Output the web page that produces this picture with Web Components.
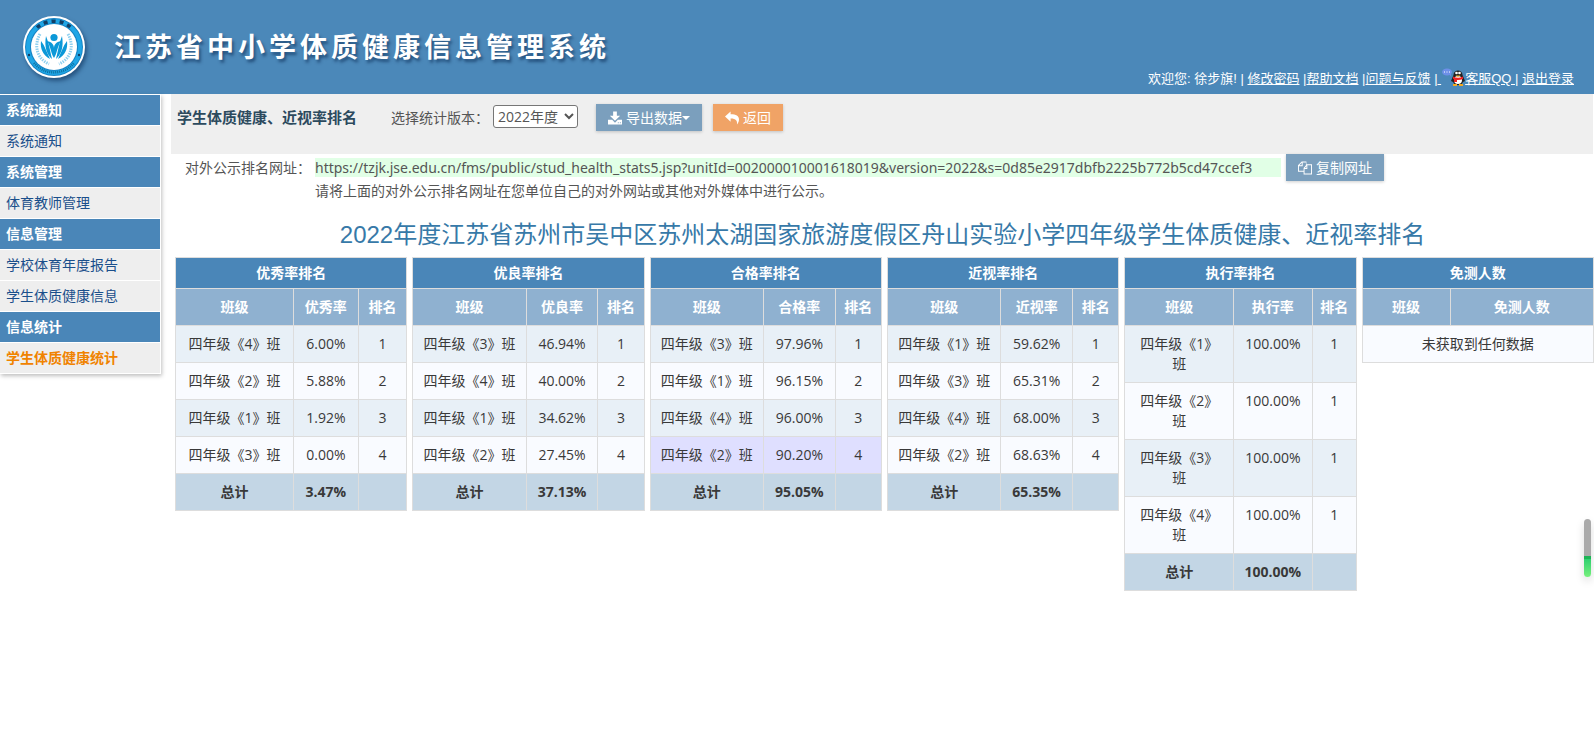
<!DOCTYPE html>
<html lang="zh-CN">
<head>
<meta charset="utf-8">
<title>江苏省中小学体质健康信息管理系统</title>
<style>
  body {
    margin: 0;
    background: #fff;
    color: #555;
    font: 14px/20px "Open Sans", "Noto Sans CJK SC", sans-serif;
  }
</style>
</head>
<body>
<health-app></health-app>

<script>
const define = (name, html, setup) => {
  const template = document.createElement("template");
  template.innerHTML = html;
  customElements.define(
    name,
    class extends HTMLElement {
      connectedCallback() {
        if (this.shadowRoot) return;
        this.attachShadow({ mode: "open" });
        this.shadowRoot.appendChild(template.content.cloneNode(true));
        if (setup) setup(this, this.shadowRoot);
      }
    }
  );
};

define("school-logo", /* HTML */ `
  <style>
    :host { display: block; width: 68px; height: 68px; }
    svg { display: block; filter: drop-shadow(2px 3px 2px rgb(0 30 70 / 0.5)); }
  </style>
  <svg width="68" height="68" viewBox="0 0 68 68" aria-hidden="true">
    <circle cx="34" cy="34" r="31" fill="#fff"/>
    <circle cx="34" cy="34" r="29" fill="#1583c4"/>
    <circle cx="34" cy="34" r="26" fill="none" stroke="#1fa6e6" stroke-width="4"/>
    <path d="M17 14.500A26 26 0 0 1 51 14.500" fill="none" stroke="#123f66" stroke-width="3.500" stroke-dasharray="4 4"/>
    <path d="M14 50A26 26 0 0 0 54 50" fill="none" stroke="#0d6d9c" stroke-width="2.500" stroke-dasharray="1 1"/>
    <circle cx="9" cy="42" r="1.200" fill="#123f66"/>
    <circle cx="59" cy="42" r="1.200" fill="#123f66"/>
    <circle cx="34" cy="34" r="23" fill="#fff"/>
    <path d="M20 21C14 32 16 45 29 51M48 21C54 32 52 45 39 51" fill="none" stroke="#8fd0ef" stroke-width="3" stroke-dasharray="1.500 1"/>
    <g fill="#0b98d8">
      <circle cx="34" cy="24.500" r="3.600"/>
      <path d="M34 45C31 41 31 34 27 28C32 29 34 32 34 35C34 32 36 29 41 28C37 34 37 41 34 45Z"/>
      <path d="M32 46C27 42 24 34 26 23C29 30 30 38 32 46ZM36 46C41 42 44 34 42 23C39 30 38 38 36 46Z"/>
      <path d="M30 46C23 42 20 36 21 28C25 33 27 40 30 46ZM38 46C45 42 48 36 47 28C43 33 41 40 38 46Z"/>
    </g>
  </svg>
`);

define("qq-icon", /* HTML */ `
  <style>
    :host { display: inline-block; width: 24px; height: 18px; vertical-align: -3px; }
    svg { display: block; }
  </style>
  <svg width="24" height="18" viewBox="0 0 24 18" aria-hidden="true">
    <ellipse cx="6" cy="4" rx="5" ry="3.500" fill="#6d8fe8"/>
    <path d="M7 6l3 2V5z" fill="#6d8fe8"/>
    <path d="M3 4h1M5.500 4h1M8 4h1" stroke="#fff"/>
    <path d="M12.500 7C12.500 1 21.500 1 21.500 7L24 13L22 14L20 17H14L12 14L10 13Z" fill="#222"/>
    <ellipse cx="17" cy="12" rx="4" ry="4" fill="#fff"/>
    <path d="M12 8.500Q17 11 22 8.500V11Q17 13 12 11ZM13 10h3v4h-3z" fill="#e22"/>
    <circle cx="15.500" cy="5" r="1.300" fill="#fff"/>
    <circle cx="18.500" cy="5" r="1.300" fill="#fff"/>
    <path d="M14.500 7.500h5l-2.500 1.500zM12 16h4v2h-4zM18 16h4v2h-4z" fill="#f5a81c"/>
  </svg>
`);

define("site-header", /* HTML */ `
  <style>
    :host {
      display: flex;
      align-items: center;
      gap: 26px;
      box-sizing: border-box;
      height: 94px;
      padding: 0 20px;
      background: #4b88b9;
      color: #fff;
    }
    h1 {
      margin: 0;
      padding-bottom: 2px;
      font: bold 27px/40px "Noto Sans CJK SC", sans-serif;
      letter-spacing: 4px;
      text-shadow: 2px 3px 3px rgb(0 30 70 / 0.5);
    }
    nav {
      align-self: flex-end;
      margin-left: auto;
      padding-bottom: 5px;
      font: 13px/20px "Liberation Sans", "Noto Sans CJK SC", sans-serif;
    }
    a { color: inherit; }
  </style>
  <school-logo></school-logo>
  <h1>江苏省中小学体质健康信息管理系统</h1>
  <nav>欢迎您: 徐步旗! | <a href="#">修改密码</a> |<a href="#">帮助文档</a> |<a href="#">问题与反馈</a> |<a href="#"> <qq-icon></qq-icon>客服QQ </a>| <a href="#">退出登录</a></nav>
`);

define("side-menu", /* HTML */ `
  <style>
    :host {
      display: block;
      border: solid #fff;
      border-width: 1px 1px 0 0;
      box-shadow: 1px 2px 4px rgb(0 0 0 / 0.25);
    }
  </style>
  <slot></slot>
`);

define("menu-group", /* HTML */ `
  <style>
    :host { display: block; }
    h2 {
      margin: 0;
      padding: 5px 6px;
      border-bottom: 1px solid #fff;
      background: #4a86b8;
      color: #fff;
      font-size: 14px;
      line-height: 20px;
    }
  </style>
  <h2></h2>
  <slot></slot>
`, (host, root) => {
  root.querySelector("h2").textContent = host.getAttribute("label");
});

define("menu-item", /* HTML */ `
  <style>
    :host { display: block; }
    a {
      display: block;
      padding: 5px 6px;
      border-bottom: 1px solid #fff;
      background: #eee;
      color: #1a4f8b;
      text-decoration: none;
    }
    :host([active]) a { color: #f08300; font-weight: bold; }
  </style>
  <a href="#"><slot></slot></a>
`);

define("flat-button", /* HTML */ `
  <style>
    :host { display: block; }
    button {
      display: flex;
      align-items: center;
      gap: 4px;
      height: 27px;
      padding: 0 12px;
      border: 0;
      background: var(--button-color, #7b9fbd);
      box-shadow: 0 1px 3px rgb(0 0 0 / 0.2);
      color: #fff;
      font: inherit;
      white-space: nowrap;
    }
    svg { fill: #fff; }
    .caret {
      display: none;
      margin-left: -4px;
      border: 4px solid transparent;
      border-top-color: #fff;
      border-bottom: 0;
    }
    :host([dropdown]) .caret { display: block; }
  </style>
  <button type="button">
    <svg width="14" height="14" viewBox="0 0 15 14" aria-hidden="true"><path/></svg>
    <slot></slot>
    <span class="caret"></span>
  </button>
`, (host, root) => {
  const icons = {
    download: "M5.500 0h4v4.500h3.500L7.500 10L2 4.500h3.500zM0 9h4.500l3 3l3-3H15v5H0zM10.500 11.500v1h1v-1zM12.700 11.500v1h1v-1z",
    reply: "M6 0v3C12 3 15 5 15 8.500c0 2.200-1 4-2.200 5.500C13.400 10 12 7.500 6 7.500V11L0 5.500z",
    copy: "M4 0h5v3h6v11H6v-3H0V4zM4 1.500L1.500 4H4zM5 1v4H1v5h5V7l2.500-3V1zM10 4v4H7v5h7V4zM9 5L7.500 7H9z"
  };
  const path = root.querySelector("path");
  path.setAttribute("d", icons[host.getAttribute("icon")]);
  path.setAttribute("fill-rule", "evenodd");
});

define("tool-bar", /* HTML */ `
  <style>
    :host {
      display: flex;
      align-items: flex-start;
      box-sizing: border-box;
      height: 60px;
      margin-right: 1px;
      padding: 10px 6px;
      background: #efefef;
    }
    h2 { margin: 0 34px 0 0; color: #2c4a5e; font-size: 15px; line-height: 27px; }
    label { margin-right: 4px; line-height: 27px; }
    select {
      width: 85px;
      height: 23px;
      margin: 1px 18px 0 0;
      padding: 0;
      border: 1px solid #767676;
      border-radius: 3px;
      background: #fff;
      color: #555;
      font: inherit;
    }
    .back { --button-color: #f0a366; margin-left: 11px; }
  </style>
  <h2>学生体质健康、近视率排名</h2>
  <label for="version">选择统计版本：</label>
  <select id="version"><option>2022年度</option></select>
  <flat-button icon="download" dropdown>导出数据</flat-button>
  <flat-button class="back" icon="reply">返回</flat-button>
`);

define("public-link", /* HTML */ `
  <style>
    :host {
      display: grid;
      grid-template-columns: 126px 1fr;
      column-gap: 4px;
      padding-left: 14px;
    }
    .row { display: flex; align-items: center; gap: 5px; height: 27px; }
    .url {
      flex: 0 1 966px;
      background: #e1ffe6;
      font-family: "Noto Sans", sans-serif;
      line-height: 19px;
    }
    .note { grid-column: 2; }
  </style>
  <span class="row">对外公示排名网址：</span>
  <div class="row">
    <span class="url">https://tzjk.jse.edu.cn/fms/public/stud_health_stats5.jsp?unitId=002000010001618019&amp;version=2022&amp;s=0d85e2917dbfb2225b772b5cd47ccef3</span>
    <flat-button icon="copy">复制网址</flat-button>
  </div>
  <span class="note">请将上面的对外公示排名网址在您单位自己的对外网站或其他对外媒体中进行公示。</span>
`);

// rank-table reads its cells from the "rows" attribute: rows split by ";", cells by ","
define("rank-table", /* HTML */ `
  <style>
    :host { display: block; min-width: 0; }
    table {
      width: 100%;
      table-layout: fixed;
      border-collapse: collapse;
      color: #393939;
      text-align: center;
    }
    th, td { padding: 8px; border: 1px solid #ddd; vertical-align: top; }
    thead th { background: #8fb1d0; color: #fff; padding: 8px 0; }
    thead tr:first-child th { padding: 5px; background: #4a86b8; }
    tbody tr { background: #f9fbff; }
    tbody tr:nth-child(odd):not(.empty) { background: #e8f0f7; }
    tbody tr.marked { background: #dfdfff; }
    tfoot { background: #c3d6e5; }
    tfoot th { height: 20px; }
    td:first-child { padding-inline: 9px; }
  </style>
  <table>
    <colgroup></colgroup>
    <thead></thead>
    <tbody></tbody>
    <tfoot></tfoot>
  </table>
`, (host, root) => {
  const attr = (name) => host.getAttribute(name) || "";
  const row = (cells, tag) => `<tr>${cells.map((c) => `<${tag}>${c}</${tag}>`).join("")}</tr>`;
  const heads = attr("heads").split(",");
  const widths = attr("widths").split(",");
  root.querySelector("colgroup").innerHTML =
    heads.map((_, i) => `<col${widths[i] ? ` style="width: ${widths[i]}%"` : ""}>`).join("");
  root.querySelector("thead").innerHTML =
    `<tr><th colspan="${heads.length}">${attr("label")}</th></tr>` + row(heads, "th");
  const body = root.querySelector("tbody");
  if (attr("rows")) {
    body.innerHTML = attr("rows").split(";").map((r) => {
      const [n, rate, rank] = r.split(",");
      return row([`四年级《${n}》班`, rate, rank], "td");
    }).join("");
    root.querySelector("tfoot").innerHTML = row(["总计", attr("total"), ""], "th");
  } else {
    body.innerHTML = `<tr class="empty"><td colspan="${heads.length}">未获取到任何数据</td></tr>`;
  }
  if (attr("marked")) body.rows[attr("marked") - 1].className = "marked";
});

define("rank-board", /* HTML */ `
  <style>
    :host { display: block; padding-top: 16px; }
    h2 {
      margin: 0;
      color: #3779a8;
      font: 24px/36px "Liberation Sans", "Noto Sans CJK SC", sans-serif;
      text-align: center;
    }
    div {
      display: grid;
      grid-template-columns: repeat(6, minmax(0, 1fr));
      align-items: start;
      gap: 5px;
      padding: 4px 0 0 4px;
    }
  </style>
  <h2>2022年度江苏省苏州市吴中区苏州太湖国家旅游度假区舟山实验小学四年级学生体质健康、近视率排名</h2>
  <div>
    <rank-table label="优秀率排名" heads="班级,优秀率,排名" widths="51,28" rows="4,6.00%,1;2,5.88%,2;1,1.92%,3;3,0.00%,4" total="3.47%"></rank-table>
    <rank-table label="优良率排名" heads="班级,优良率,排名" widths="49,31" rows="3,46.94%,1;4,40.00%,2;1,34.62%,3;2,27.45%,4" total="37.13%"></rank-table>
    <rank-table label="合格率排名" heads="班级,合格率,排名" widths="49,31" rows="3,97.96%,1;1,96.15%,2;4,96.00%,3;2,90.20%,4" total="95.05%" marked="4"></rank-table>
    <rank-table label="近视率排名" heads="班级,近视率,排名" widths="49,31" rows="1,59.62%,1;3,65.31%,2;4,68.00%,3;2,68.63%,4" total="65.35%"></rank-table>
    <rank-table label="执行率排名" heads="班级,执行率,排名" widths="47,34" rows="1,100.00%,1;2,100.00%,1;3,100.00%,1;4,100.00%,1" total="100.00%"></rank-table>
    <rank-table label="免测人数" heads="班级,免测人数" widths="38"></rank-table>
  </div>
`);

define("scroll-gauge", /* HTML */ `
  <style>
    :host {
      position: fixed;
      right: 3px;
      bottom: 179px;
      width: 7px;
      height: 58px;
      border-radius: 4px;
      background: linear-gradient(#aaa 37px, #1cb455 37px 40px, #30d070 40px, #77f07c);
      box-shadow: 0 4px 8px rgb(0 0 0 / 0.15);
    }
  </style>
`);

define("health-app", /* HTML */ `
  <style>
    :host { display: block; }
    .page {
      display: grid;
      grid-template-columns: 161px minmax(0, 1fr);
      align-items: start;
      column-gap: 10px;
    }
  </style>
  <site-header></site-header>
  <div class="page">
    <side-menu>
      <menu-group label="系统通知">
        <menu-item>系统通知</menu-item>
      </menu-group>
      <menu-group label="系统管理">
        <menu-item>体育教师管理</menu-item>
      </menu-group>
      <menu-group label="信息管理">
        <menu-item>学校体育年度报告</menu-item>
        <menu-item>学生体质健康信息</menu-item>
      </menu-group>
      <menu-group label="信息统计">
        <menu-item active>学生体质健康统计</menu-item>
      </menu-group>
    </side-menu>
    <main>
      <tool-bar></tool-bar>
      <public-link></public-link>
      <rank-board></rank-board>
    </main>
  </div>
  <scroll-gauge></scroll-gauge>
`);
</script>
</body>
</html>
